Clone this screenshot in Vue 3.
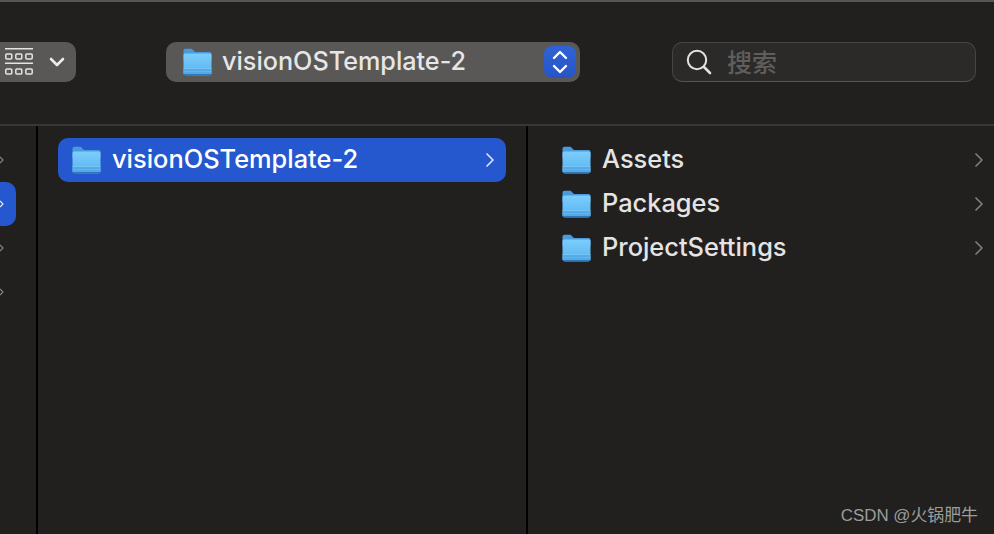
<script setup>
const rightRows = ['Assets', 'Packages', 'ProjectSettings']
const leftRows = [false, true, false, false]
</script>

<template>
  <div class="finder">
    <svg class="defs" width="0" height="0" aria-hidden="true">
      <defs>
        <linearGradient id="folderBody" x1="0" y1="0" x2="0" y2="1">
          <stop offset="0" stop-color="#7ccdfc" />
          <stop offset="0.7" stop-color="#62bbf4" />
          <stop offset="1" stop-color="#58aeea" />
        </linearGradient>
        <symbol id="folder" viewBox="0 0 29 28">
          <path d="M0.5 3C0.5 1.6 1.4 0.8 2.6 0.8H7.6C8.6 0.8 9.2 1.2 9.9 1.9L12 3.9H26.4C27.7 3.9 28.5 4.8 28.5 6V12H0.5Z" fill="#4a9bdc" />
          <path d="M0.5 7.2C0.5 6.2 1.2 5.6 2.2 5.6H26.8C27.8 5.6 28.5 6.2 28.5 7.2V25C28.5 26.3 27.7 27.2 26.4 27.2H2.6C1.3 27.2 0.5 26.3 0.5 25Z" fill="url(#folderBody)" />
          <rect x="0.5" y="20" width="28" height="1" fill="#8fd0f5" opacity="0.45" />
          <path d="M0.5 21V25C0.5 26.3 1.3 27.2 2.6 27.2H26.4C27.7 27.2 28.5 26.3 28.5 25V21Z" fill="#54a9e6" />
          <rect x="0.5" y="23" width="28" height="1" fill="#7cc3ee" opacity="0.4" />
          <path d="M0.7 26H28.3C28 26.8 27.3 27.4 26.4 27.4H2.6C1.7 27.4 1 26.8 0.7 26Z" fill="#2f78b8" />
        </symbol>
      </defs>
    </svg>

    <header class="toolbar">
      <div class="view-btn">
        <svg class="grid-icon" width="30" height="28" viewBox="0 0 30 28" fill="none" stroke="#e4e4e4">
          <path d="M0 0.7H28M0 15.3H28" stroke-width="1.6" />
          <rect x="0.8" y="6" width="6" height="5" rx="1" stroke-width="1.5" />
          <rect x="10.8" y="6" width="6" height="5" rx="1" stroke-width="1.5" />
          <rect x="20.8" y="6" width="6.4" height="5" rx="1" stroke-width="1.5" />
          <rect x="0.8" y="21" width="6" height="5" rx="1" stroke-width="1.5" />
          <rect x="10.8" y="21" width="6" height="5" rx="1" stroke-width="1.5" />
          <rect x="20.8" y="21" width="6.4" height="5" rx="1" stroke-width="1.5" />
        </svg>
        <svg width="16" height="10" viewBox="0 0 16 10" fill="none" stroke="#ececec" stroke-width="2.6" stroke-linecap="round" stroke-linejoin="round">
          <path d="M2 2L8 8L14 2" />
        </svg>
      </div>

      <div class="path-btn">
        <svg class="folder-lg"><use href="#folder" /></svg>
        <span class="path-name">visionOSTemplate-2</span>
        <span class="stepper">
          <svg width="18" height="26" viewBox="0 0 18 26" fill="none" stroke="#ffffff" stroke-width="2.4" stroke-linecap="round" stroke-linejoin="round">
            <path d="M3 9L9 3L15 9M3 17L9 23L15 17" />
          </svg>
        </span>
      </div>

      <div class="search">
        <svg width="26" height="26" viewBox="0 0 26 26" fill="none" stroke="#e2e2e2">
          <circle cx="11" cy="11" r="9.2" stroke-width="2" />
          <path d="M18 18L24 24" stroke-width="2.6" stroke-linecap="round" />
        </svg>
        <span class="search-text">搜索</span>
      </div>
    </header>

    <main class="columns">
      <section class="col col-first">
        <div v-for="(sel, i) in leftRows" :key="i" class="stub-row" :class="{ selected: sel }">
          <svg width="6" height="12" viewBox="0 0 6 12" fill="none" :stroke="sel ? '#f0f0f0' : '#8a8a8a'" stroke-width="1.6">
            <path d="M0 1.5L4.5 6L0 10.5" />
          </svg>
        </div>
      </section>

      <section class="col col-second">
        <div class="row selected">
          <svg class="folder-sm"><use href="#folder" /></svg>
          <span class="name">visionOSTemplate-2</span>
          <svg class="chev" width="10" height="16" viewBox="0 0 10 16" fill="none" stroke="#d8e2f8" stroke-width="1.7" stroke-linecap="round" stroke-linejoin="round">
            <path d="M2 2L8 8L2 14" />
          </svg>
        </div>
      </section>

      <section class="col col-third">
        <div v-for="name in rightRows" :key="name" class="row">
          <svg class="folder-sm"><use href="#folder" /></svg>
          <span class="name">{{ name }}</span>
          <svg class="chev" width="10" height="16" viewBox="0 0 10 16" fill="none" stroke="#7e7e7e" stroke-width="1.7" stroke-linecap="round" stroke-linejoin="round">
            <path d="M2 2L8 8L2 14" />
          </svg>
        </div>
      </section>
    </main>

    <div class="watermark">CSDN @火锅肥牛</div>
  </div>
</template>

<style>
html,
body {
  margin: 0;
  background: #21201f;
}
</style>

<style scoped>
.finder {
  position: relative;
  width: 994px;
  height: 534px;
  overflow: hidden;
  background: #21201f;
  font-family: Inter, "Noto Sans CJK SC", sans-serif;
  display: flex;
  flex-direction: column;
}

.defs {
  position: absolute;
}

.toolbar {
  box-sizing: border-box;
  height: 126px;
  flex: none;
  border-top: 2px solid #575654;
  border-bottom: 2px solid #393837;
  padding: 40px 18px 0 0;
  display: flex;
  align-items: flex-start;
}

.view-btn {
  box-sizing: border-box;
  width: 76px;
  height: 40px;
  background: #595856;
  border-radius: 0 10px 10px 0;
  padding: 0 11px 0 5px;
  display: flex;
  align-items: center;
  justify-content: space-between;
}

.path-btn {
  box-sizing: border-box;
  width: 414px;
  height: 40px;
  margin-left: 90px;
  background: #595856;
  border-radius: 10px;
  padding: 0 4px 0 17px;
  display: flex;
  align-items: center;
}

.folder-lg {
  width: 29px;
  height: 28px;
  flex: none;
}

.path-name {
  margin: 0 0 2px 10px;
  font-size: 25.2px;
  font-weight: 500;
  color: #e6e6e6;
  flex: 1;
  white-space: nowrap;
}

.stepper {
  width: 32px;
  height: 32px;
  border-radius: 8px;
  background: linear-gradient(#2f63d6, #2755c6);
  display: flex;
  align-items: center;
  justify-content: center;
}

.search {
  box-sizing: border-box;
  width: 304px;
  height: 40px;
  margin-left: auto;
  background: #2b2a29;
  border: 1px solid #464544;
  border-bottom-color: #555453;
  border-radius: 10px;
  padding: 0 0 0 13px;
  display: flex;
  align-items: center;
  gap: 15px;
}

.search-text {
  margin-bottom: 2px;
  font-size: 25px;
  color: #5f5e5d;
  font-weight: 500;
}

.columns {
  flex: 1;
  display: flex;
}

.col {
  box-sizing: border-box;
  padding-top: 12px;
}

.col-first {
  width: 38px;
  border-right: 2px solid #000;
}

.stub-row {
  box-sizing: border-box;
  width: 16px;
  height: 44px;
  display: flex;
  align-items: center;
  justify-content: flex-end;
  padding-right: 12px;
  overflow: hidden;
}

.stub-row.selected {
  background: #2558ce;
  border-radius: 0 10px 10px 0;
}

.col-second {
  width: 490px;
  border-right: 2px solid #000;
  padding-left: 20px;
  padding-right: 20px;
}

.col-third {
  flex: 1;
  padding-left: 34px;
}

.row {
  box-sizing: border-box;
  height: 44px;
  display: flex;
  align-items: center;
  border-radius: 10px;
}

.col-second .row {
  padding: 0 11px 0 14px;
}

.col-third .row {
  padding-right: 10px;
}

.row.selected {
  background: #2558ce;
}

.folder-sm {
  width: 29px;
  height: 28px;
  flex: none;
}

.name {
  flex: 1;
  margin: 0 0 3px 11px;
  font-size: 25.4px;
  font-weight: 500;
  color: #e4e4e4;
  white-space: nowrap;
}

.row.selected .name {
  color: #ffffff;
}

.watermark {
  position: absolute;
  right: 16px;
  bottom: 8px;
  font-family: "Liberation Sans", "Noto Sans CJK SC", sans-serif;
  font-size: 16.9px;
  color: #9c9c9c;
}
</style>
